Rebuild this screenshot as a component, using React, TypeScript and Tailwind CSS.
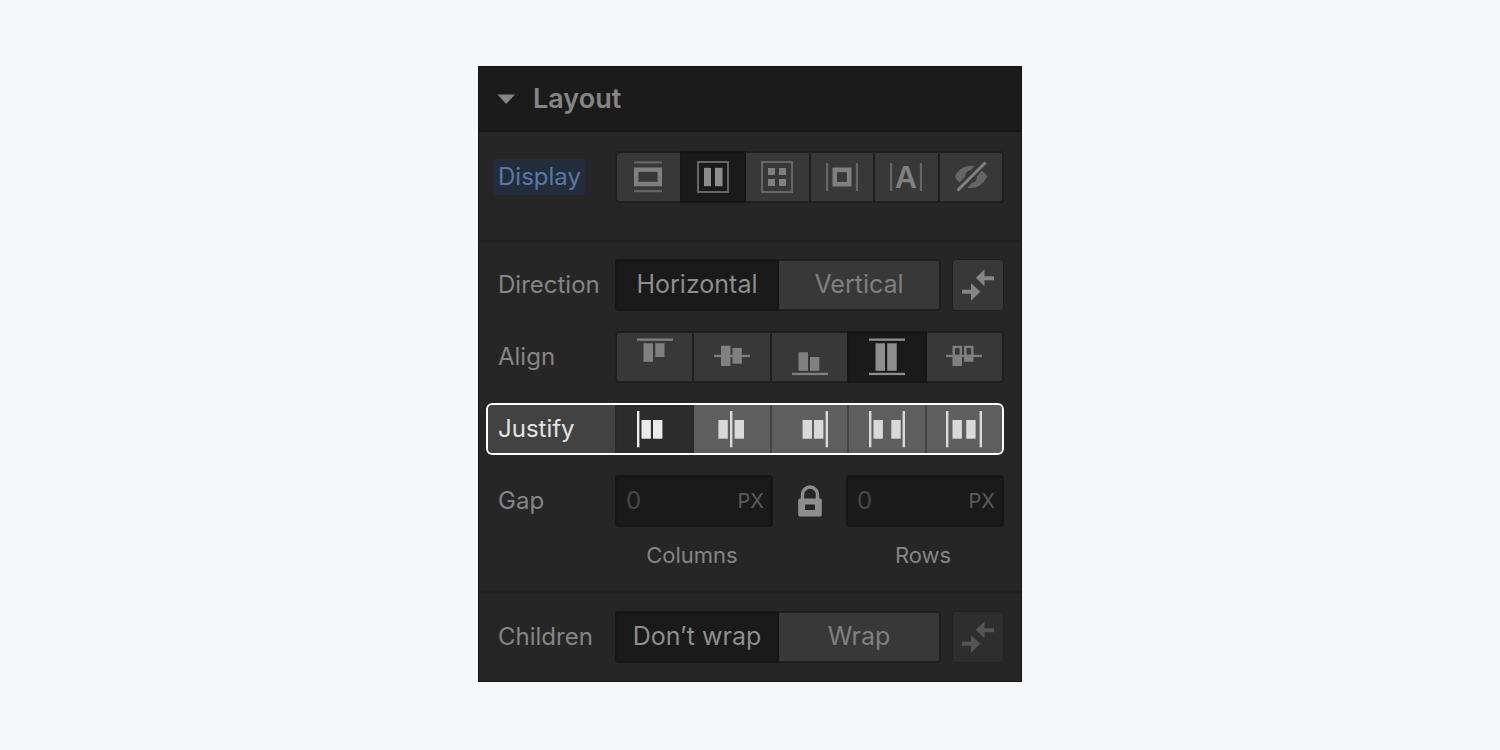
import { useState } from "react";
import type { ReactNode } from "react";
import clsx from "clsx";

interface Option {
  id: string;
  label: string;
  content: ReactNode;
}

interface SegmentsProps {
  name: string;
  options: Option[];
  initial: string;
  highlighted?: boolean;
}

const Icon = ({ width = 36, height = 38, children }: { width?: number; height?: number; children: ReactNode }) => (
  <svg width={width} height={height} viewBox={`0 0 ${width} ${height}`} fill="currentColor" aria-hidden="true">
    {children}
  </svg>
);

const displayOptions: Option[] = [
  {
    id: "block",
    label: "Block",
    content: (
      <Icon width={28} height={32}>
        <rect y="0.3" width="28" height="2.2" opacity="0.65" />
        <rect x="2.2" y="8.7" width="23.6" height="14.3" fill="none" stroke="currentColor" strokeWidth="4.4" />
        <rect y="29" width="28" height="2.2" opacity="0.65" />
      </Icon>
    ),
  },
  {
    id: "flex",
    label: "Flex",
    content: (
      <Icon width={32} height={32}>
        <rect x="1" y="1" width="30" height="30" fill="none" stroke="currentColor" strokeWidth="2" opacity="0.65" />
        <rect x="7" y="6.8" width="7" height="18.4" />
        <rect x="18" y="6.8" width="7.5" height="18.4" />
      </Icon>
    ),
  },
  {
    id: "grid",
    label: "Grid",
    content: (
      <Icon width={32} height={32}>
        <rect x="1" y="1" width="30" height="30" fill="none" stroke="currentColor" strokeWidth="2" opacity="0.65" />
        <rect x="7" y="7" width="7" height="7" />
        <rect x="18" y="7" width="7" height="7" />
        <rect x="7" y="18" width="7" height="7" />
        <rect x="18" y="18" width="7" height="7" />
      </Icon>
    ),
  },
  {
    id: "inline-block",
    label: "Inline block",
    content: (
      <Icon width={32} height={32}>
        <rect y="2" width="2.2" height="28" opacity="0.65" />
        <rect x="8.8" y="8.8" width="14.4" height="14.4" fill="none" stroke="currentColor" strokeWidth="4.6" />
        <rect x="29.8" y="2" width="2.2" height="28" opacity="0.65" />
      </Icon>
    ),
  },
  {
    id: "inline",
    label: "Inline",
    content: (
      <Icon width={32} height={44}>
        <rect y="8" width="2.2" height="28" opacity="0.65" />
        <text x="16" y="33" textAnchor="middle" fontSize="30" fontWeight="600">
          A
        </text>
        <rect x="29.8" y="8" width="2.2" height="28" opacity="0.65" />
      </Icon>
    ),
  },
  {
    id: "none",
    label: "None",
    content: (
      <Icon width={32} height={32}>
        <path
          d="M0 15.5C3.5 8 10.5 4 19.5 5L15.8 9.3C12 9.6 10 12.5 10.3 15.5L4.8 21.2C2.5 19.7 1 17.8 0 15.5Z"
          opacity="0.65"
        />
        <path
          d="M32 15.5C28.5 23.5 21.5 28 12.5 26.8L16.8 22C20.5 21.5 22.3 18.8 21.8 15.6L26.8 9.8C29.3 11.2 31 13 32 15.5Z"
          opacity="0.65"
        />
        <path d="M2.5 29.5L30.5 1.5" stroke="currentColor" strokeWidth="3" />
      </Icon>
    ),
  },
];

const alignOptions: Option[] = [
  {
    id: "start",
    label: "Start",
    content: (
      <Icon>
        <rect y="0.5" width="36" height="2.3" />
        <rect x="6.5" y="5.3" width="9.5" height="18.5" />
        <rect x="18.3" y="5.3" width="9.2" height="13.7" />
      </Icon>
    ),
  },
  {
    id: "center",
    label: "Center",
    content: (
      <Icon>
        <rect y="16.8" width="36" height="2.3" />
        <rect x="7" y="7.7" width="9.5" height="20.3" />
        <rect x="18.5" y="10" width="9.3" height="15.7" />
      </Icon>
    ),
  },
  {
    id: "end",
    label: "End",
    content: (
      <Icon>
        <rect x="6.5" y="14.3" width="9.5" height="18.5" />
        <rect x="18" y="19" width="9.3" height="13.8" />
        <rect y="34.8" width="36" height="2.3" />
      </Icon>
    ),
  },
  {
    id: "stretch",
    label: "Stretch",
    content: (
      <Icon>
        <rect y="0.5" width="36" height="2.3" />
        <rect x="6.5" y="5.3" width="9.5" height="27.5" />
        <rect x="18.2" y="5.3" width="9.5" height="27.5" />
        <rect y="34.8" width="36" height="2.3" />
      </Icon>
    ),
  },
  {
    id: "baseline",
    label: "Baseline",
    content: (
      <Icon>
        <rect y="16.8" width="36" height="2.3" />
        <path fillRule="evenodd" d="M6.5 7.7h9.5V28H6.500zM9 10v6.800h4.600V10z" />
        <path fillRule="evenodd" d="M18 7.7h9.500v16H18zM20.500 10v6.800h4.600V10z" />
      </Icon>
    ),
  },
];

const justifyOptions: Option[] = [
  {
    id: "start",
    label: "Start",
    content: (
      <Icon>
        <rect y="1" width="2.4" height="36.3" />
        <rect x="4.5" y="10" width="9.4" height="18.7" />
        <rect x="16" y="10" width="9.4" height="18.7" />
      </Icon>
    ),
  },
  {
    id: "center",
    label: "Center",
    content: (
      <Icon>
        <rect x="16" y="1" width="2.4" height="36.3" />
        <rect x="4.4" y="10" width="9.4" height="18.7" />
        <rect x="20.6" y="10" width="9.4" height="18.7" />
      </Icon>
    ),
  },
  {
    id: "end",
    label: "End",
    content: (
      <Icon>
        <rect x="10.6" y="10" width="9.4" height="18.7" />
        <rect x="22" y="10" width="9.4" height="18.7" />
        <rect x="33.6" y="1" width="2.4" height="36.3" />
      </Icon>
    ),
  },
  {
    id: "space-between",
    label: "Space between",
    content: (
      <Icon>
        <rect y="1" width="2.4" height="36.3" />
        <rect x="4.5" y="10" width="9.4" height="18.7" />
        <rect x="22.3" y="10" width="9.4" height="18.7" />
        <rect x="33.6" y="1" width="2.4" height="36.3" />
      </Icon>
    ),
  },
  {
    id: "space-around",
    label: "Space around",
    content: (
      <Icon>
        <rect y="1" width="2.4" height="36.3" />
        <rect x="6.5" y="10" width="9.4" height="18.7" />
        <rect x="20.2" y="10" width="9.4" height="18.7" />
        <rect x="33.6" y="1" width="2.4" height="36.3" />
      </Icon>
    ),
  },
];

const directionOptions: Option[] = [
  { id: "horizontal", label: "Horizontal", content: "Horizontal" },
  { id: "vertical", label: "Vertical", content: "Vertical" },
];

const wrapOptions: Option[] = [
  { id: "nowrap", label: "Don’t wrap", content: "Don’t wrap" },
  { id: "wrap", label: "Wrap", content: "Wrap" },
];

const Segments = ({ name, options, initial, highlighted }: SegmentsProps) => {
  const [selected, setSelected] = useState(initial);

  return (
    <div
      role="group"
      aria-label={name}
      className={clsx("flex h-[52px] min-w-0 flex-1 gap-[2px] rounded-sm p-[2px]", highlighted ? "bg-[#434343]" : "bg-[#1f1f1f]")}
    >
      {options.map((option) => {
        const active = option.id === selected;
        return (
          <button
            key={option.id}
            type="button"
            aria-label={option.label}
            aria-pressed={active}
            onClick={() => setSelected(option.id)}
            className={clsx(
              "flex min-w-0 flex-1 items-center justify-center whitespace-nowrap text-[25px] first:rounded-l-xs last:rounded-r-xs",
              highlighted && active && "bg-[#2c2c2c] text-[#ebebeb] ring-2 ring-[#2a2a2a]",
              highlighted && !active && "bg-[#5e5e5e] text-[#d9d9d9]",
              !highlighted && active && "bg-[#1a1a1a] text-[#8e8e8e] ring-2 ring-[#161616]",
              !highlighted && !active && "bg-[#383838] text-[#808080]"
            )}
          >
            {option.content}
          </button>
        );
      })}
    </div>
  );
};

const ReverseButton = ({ label, disabled }: { label: string; disabled?: boolean }) => (
  <button
    type="button"
    aria-label={label}
    disabled={disabled}
    className={clsx(
      "flex size-[52px] shrink-0 items-center justify-center rounded-sm border",
      disabled ? "border-[#222222] bg-[#2e2e2e] text-[#555555]" : "border-[#1f1f1f] bg-[#383838] text-[#858585]"
    )}
  >
    <Icon width={32} height={32}>
      <path d="M0 20.8H9V14.3L18.3 22.8L9 31.7V24.8H0Z" />
      <path d="M32 7.2H22.5V0.5L13.8 8.8L22.5 17.3V11.2H32Z" />
    </Icon>
  </button>
);

const Row = ({ label, children, highlighted }: { label: string; children: ReactNode; highlighted?: boolean }) => (
  <div
    className={clsx(
      "relative flex h-[52px] items-center pl-3",
      highlighted && "overflow-hidden rounded-md bg-[#424242]"
    )}
  >
    <span className={clsx("w-[117px] shrink-0", highlighted && "text-[#e4e4e4]")}>{label}</span>
    {children}
    {highlighted && <div className="pointer-events-none absolute inset-0 rounded-md border-2 border-white" />}
  </div>
);

const GapInput = ({ id, label }: { id: string; label: string }) => {
  const [value, setValue] = useState("0");

  return (
    <div className="w-[158px]">
      <div className="flex h-[52px] items-center rounded-sm border-2 border-[#161616] bg-[#1a1a1a] pr-[7px] pl-[9px]">
        <input
          id={id}
          type="text"
          value={value}
          onChange={(e) => setValue(e.target.value)}
          className="w-full min-w-0 bg-transparent text-[#484848] outline-none"
        />
        <button type="button" aria-label={`${label} unit`} className="text-xl text-[#5c5c5c]">
          PX
        </button>
      </div>
      <label htmlFor={id} className="mt-3 block pr-1 text-center text-[22px] leading-8">
        {label}
      </label>
    </div>
  );
};

export default function App() {
  const [open, setOpen] = useState(true);

  return (
    <main className="flex min-h-screen items-start justify-center bg-[#f5f7f9] pt-[66px] font-['Inter',sans-serif] text-2xl text-[#858585]">
      <section className="w-full max-w-[544px] border border-[#141414] bg-[#262626]">
        <h2 className="border-b-2 border-[#161616] bg-[#1b1b1b]">
          <button
            type="button"
            aria-expanded={open}
            onClick={() => setOpen(!open)}
            className="flex h-[63px] w-full items-center gap-[18px] pl-[18px] text-[27px] font-semibold"
          >
            <svg width="18" height="10" viewBox="0 0 18 10" fill="currentColor" aria-hidden="true">
              <path d="M0.500 0.500H18L9.200 10Z" />
            </svg>
            Layout
          </button>
        </h2>

        {open && (
          <>
            <div className="flex h-[110px] items-start border-b-2 border-[#202020] pt-[19px] pr-[17px] pl-[19px]">
              <div className="flex h-[52px] w-[117px] shrink-0 items-center">
                <span className="-ml-[5px] rounded-sm bg-[#232c3b] px-[5px] leading-9 text-[#5878a6]">Display</span>
              </div>
              <Segments name="Display" options={displayOptions} initial="flex" />
            </div>

            <div className="flex flex-col gap-5 border-b-2 border-[#202020] pt-[17px] pr-[17px] pb-5 pl-[7px]">
              <Row label="Direction">
                <div className="flex min-w-0 flex-1 items-center gap-[11px]">
                  <Segments name="Direction" options={directionOptions} initial="horizontal" />
                  <ReverseButton label="Reverse direction" />
                </div>
              </Row>
              <Row label="Align">
                <Segments name="Align" options={alignOptions} initial="stretch" />
              </Row>
              <Row label="Justify" highlighted>
                <Segments name="Justify" options={justifyOptions} initial="start" highlighted />
              </Row>
              <div className="flex items-start pl-3">
                <span className="w-[117px] shrink-0 leading-[52px]">Gap</span>
                <div className="flex min-w-0 flex-1 items-start justify-between">
                  <GapInput id="gap-columns" label="Columns" />
                  <button
                    type="button"
                    aria-label="Lock gap values"
                    className="flex h-[52px] items-center justify-center text-[#8e8e8e]"
                  >
                    <Icon width={24} height={32}>
                      <path d="M4.5 14V9.5a7.5 7.5 0 0 1 15 0V14" fill="none" stroke="currentColor" strokeWidth="3.4" />
                      <path
                        fillRule="evenodd"
                        d="M2 13.5h20a1.8 1.8 0 0 1 1.8 1.8v14.4a1.8 1.8 0 0 1-1.8 1.8H2a1.8 1.8 0 0 1-1.8-1.8V15.3a1.8 1.8 0 0 1 1.8-1.8zM7 19.5v5.500h10v-5.500z"
                      />
                    </Icon>
                  </button>
                  <GapInput id="gap-rows" label="Rows" />
                </div>
              </div>
            </div>

            <div className="pt-[18px] pr-[17px] pb-[18px] pl-[7px]">
              <Row label="Children">
                <div className="flex min-w-0 flex-1 items-center gap-[11px]">
                  <Segments name="Children" options={wrapOptions} initial="nowrap" />
                  <ReverseButton label="Reverse wrap" disabled />
                </div>
              </Row>
            </div>
          </>
        )}
      </section>
    </main>
  );
}
